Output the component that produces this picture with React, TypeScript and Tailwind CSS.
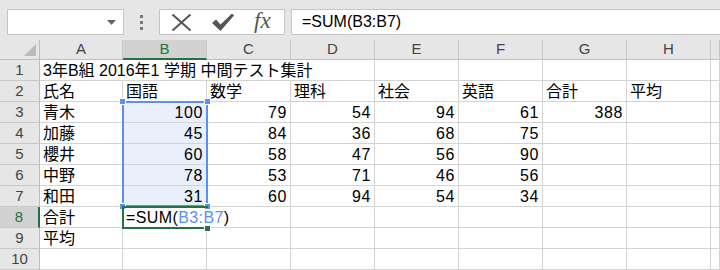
import { ReactNode } from 'react';
import clsx from 'clsx';

const COLS = ['A', 'B', 'C', 'D', 'E', 'F', 'G', 'H', ''];

type Val = string | number;

// rows 2..7 (row 1 is the title, 8 and 9 are handled apart)
const ROWS: Val[][] = [
  ['氏名', '国語', '数学', '理科', '社会', '英語', '合計', '平均'],
  ['青木', 100, 79, 54, 94, 61, 388, ''],
  ['加藤', 45, 84, 36, 68, 75, '', ''],
  ['櫻井', 60, 58, 47, 56, 90, '', ''],
  ['中野', 78, 53, 71, 46, 56, '', ''],
  ['和田', 31, 60, 94, 54, 34, '', ''],
];

type CellProps = {
  children?: ReactNode;
  right?: boolean;
  className?: string;
};

const Cell = ({ children, right, className }: CellProps) => (
  <div
    className={clsx(
      'h-[21px] leading-[21px] border-r border-b border-[#d4d4d4] whitespace-nowrap',
      right ? 'text-right pr-[3px] tracking-[0.6px]' : 'pl-[3px]',
      className
    )}
  >
    {children}
  </div>
);

const RowHead = ({ n, active }: { n: number; active?: boolean }) => (
  <div
    className={clsx(
      'h-[21px] flex items-center justify-center border-b border-[#c8c8c8] text-[15px] font-["Liberation_Sans",sans-serif]',
      active
        ? 'bg-[#d2d2d2] text-[#217346] border-r-2 border-r-[#217346]'
        : 'bg-[#e6e6e6] text-[#444] border-r border-r-[#bdbdbd]'
    )}
  >
    {n}
  </div>
);

const Toolbar = () => (
  <div className="h-[48px] flex items-start pt-[9px] pl-[7px]">
    <div className="w-[117px] h-[26px] bg-white border border-[#c6c6c6] flex items-center justify-end pr-[7px]">
      <svg width="9" height="5" viewBox="0 0 9 5">
        <polygon points="0,0 9,0 4.5,5" fill="#666" />
      </svg>
    </div>
    <div className="ml-[16px] h-[26px] flex flex-col justify-center gap-[3px]">
      <div className="w-[3px] h-[3px] bg-[#777]" />
      <div className="w-[3px] h-[3px] bg-[#777]" />
      <div className="w-[3px] h-[3px] bg-[#777]" />
    </div>
    <div className="ml-[16px] w-[126px] h-[26px] bg-white border border-[#c6c6c6] flex items-center pl-[11px]">
      <svg width="21" height="19" viewBox="0 0 21 19">
        <path d="M1.5 1.5 L19.5 17.5 M19.5 1.5 L1.5 17.5" stroke="#555" strokeWidth="2" fill="none" />
      </svg>
      <svg className="ml-[19px]" width="24" height="20" viewBox="0 0 24 20">
        <path d="M1 11 L5 7.5 L9.5 12.5 L21 1.5 L23 3.5 L9.5 19 Z" fill="#555" />
      </svg>
      <span className="ml-[19px] -mt-[2px] text-[23px] italic text-[#555] font-['Liberation_Serif',serif]">
        fx
      </span>
    </div>
    <div className="ml-[6px] flex-1 h-[26px] bg-white border border-r-0 border-[#c6c6c6] pl-[10px] text-[16px] leading-[24px] text-black font-['Liberation_Sans',sans-serif]">
      =SUM(B3:B7)
    </div>
  </div>
);

const App = () => {
  return (
    <div className="w-[720px] h-[270px] overflow-hidden bg-[#e6e6e6] flex flex-col">
      <Toolbar />
      <div className="relative bg-white grid grid-cols-[40px_83px_repeat(7,84px)_9px] grid-rows-[20px_repeat(10,21px)] text-[16px] text-black font-['Liberation_Sans','Noto_Sans_CJK_JP',sans-serif]">
        {/* column headers */}
        <div className="bg-[#e6e6e6] border-r border-b border-[#bdbdbd] flex items-end justify-end pr-[3px] pb-[3px]">
          <svg width="12" height="12" viewBox="0 0 12 12">
            <polygon points="12,0 12,12 0,12" fill="#b9b9b9" />
          </svg>
        </div>
        {COLS.map((c) => (
          <div
            key={c || 'I'}
            className={clsx(
              'flex items-center justify-center text-[15px] font-["Liberation_Sans",sans-serif] border-r border-r-[#c8c8c8]',
              c === 'B'
                ? 'bg-[#d2d2d2] text-[#217346] border-b-2 border-b-[#217346]'
                : 'bg-[#e6e6e6] text-[#444] border-b border-b-[#bdbdbd]'
            )}
          >
            {c}
          </div>
        ))}

        {/* row 1 */}
        <RowHead n={1} />
        <Cell className="col-span-4">3年B組 2016年1 学期 中間テスト集計</Cell>
        <Cell />
        <Cell />
        <Cell />
        <Cell />
        <Cell />

        {/* rows 2 - 7 */}
        {ROWS.map((row, r) => (
          <div key={r} className="contents">
            <RowHead n={r + 2} />
            {row.map((v, c) => (
              <Cell
                key={c}
                right={typeof v === 'number'}
                className={r >= 1 && c === 1 ? 'bg-[#e9effb]' : undefined}
              >
                {v}
              </Cell>
            ))}
            <Cell />
          </div>
        ))}

        {/* row 8 */}
        <RowHead n={8} active />
        <Cell>合計</Cell>
        <Cell className="border-r-0 tracking-[0.4px]">
          =SUM(<span className="text-[#5b8ff5]">B3:B7</span>)
        </Cell>
        {['C', 'D', 'E', 'F', 'G', 'H', 'I'].map((c) => (
          <Cell key={c} />
        ))}

        {/* row 9 */}
        <RowHead n={9} />
        <Cell>平均</Cell>
        {['B', 'C', 'D', 'E', 'F', 'G', 'H', 'I'].map((c) => (
          <Cell key={c} />
        ))}

        {/* row 10 */}
        <RowHead n={10} />
        {COLS.map((c) => (
          <Cell key={c || 'I'} />
        ))}

        {/* range selection B3:B7 */}
        <div className="absolute left-[122px] top-[61px] w-[86px] h-[106px] border-2 border-[#5b8ff5] pointer-events-none" />
        <div className="absolute left-[119px] top-[58px] w-[7px] h-[7px] bg-[#5b8ff5] border border-white" />
        <div className="absolute left-[204px] top-[58px] w-[7px] h-[7px] bg-[#5b8ff5] border border-white" />
        <div className="absolute left-[119px] top-[163px] w-[7px] h-[7px] bg-[#5b8ff5] border border-white" />
        <div className="absolute left-[204px] top-[163px] w-[7px] h-[7px] bg-[#5b8ff5] border border-white" />

        {/* active cell B8 */}
        <div className="absolute left-[122px] top-[166px] w-[86px] h-[23px] border-2 border-r-0 border-[#217346] pointer-events-none" />
        <div className="absolute left-[204px] top-[185px] w-[7px] h-[7px] bg-[#217346] border border-white" />
      </div>
    </div>
  );
};

export default App;
